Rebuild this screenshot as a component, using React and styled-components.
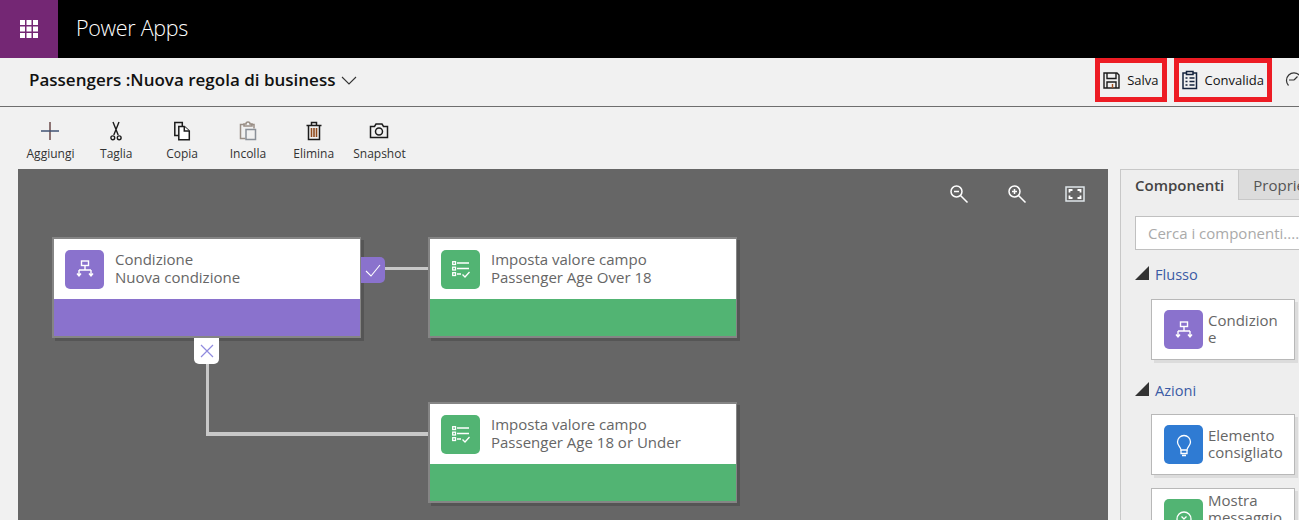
import React from "react";
import styled, { createGlobalStyle } from "styled-components";

const GlobalStyle = createGlobalStyle`
    html, body {
        margin: 0;
        padding: 0;
        height: 100%;
        overflow: hidden;
        background-color: #f1f1f1;
    }
    body {
        font-family: "Open Sans", "Noto Sans", sans-serif;
    }
`

const FlowIcon = ({ size = 22 }) => (
    <svg width={size} height={size} viewBox="0 0 22 22" fill="none" stroke="#fff" strokeWidth="1.4">
        <rect x="7.500" y="3" width="7" height="4.500" />
        <path d="M11 7.500V12M5 12h12M5 12v6M17 12v6M3 15.500l2 2.500 2-2.500M15 15.500l2 2.500 2-2.500" />
    </svg>
)

const ListIcon = ({ size = 22 }) => (
    <svg width={size} height={size} viewBox="0 0 22 22" fill="none" stroke="#fff" strokeWidth="1.3">
        <rect x="2.700" y="3.700" width="2.800" height="2.800" />
        <rect x="2.700" y="9.200" width="2.800" height="2.800" />
        <rect x="2.700" y="14.700" width="2.800" height="2.800" />
        <path d="M7 5h12M7 10.500h12M7 16h4M12.500 16.500l2.500 2.500 4.500-5" />
    </svg>
)

const BulbIcon = () => (
    <svg width="22" height="24" viewBox="0 0 22 24" fill="none" stroke="#fff" strokeWidth="1.3">
        <path d="M8 17c0-3-3.500-4-3.500-8a6.500 6.500 0 0 1 13 0c0 4-3.500 5-3.500 8z" />
        <path d="M8 17v3.500h6V17M9 22.500h4" />
    </svg>
)

const MessageIcon = () => (
    <svg width="22" height="22" viewBox="0 0 22 22" fill="none" stroke="#fff" strokeWidth="1.3">
        <circle cx="11" cy="11" r="7" />
        <path d="M8.500 8.500l5 5M13.500 8.500l-5 5" />
    </svg>
)

const AddIcon = () => (
    <svg width="20" height="20" viewBox="0 0 20 20" fill="none" strokeWidth="1.5">
        <path d="M10 1v18" stroke="#6b4a4a" />
        <path d="M1 10h18" stroke="#3f5273" />
    </svg>
)

const CutIcon = () => (
    <svg width="20" height="20" viewBox="0 0 20 20" fill="none" stroke="#1c1c1c" strokeWidth="1.4">
        <path d="M7 1l5.200 13M13 1L7.800 14" />
        <circle cx="6.800" cy="16.800" r="1.900" />
        <circle cx="13.200" cy="16.800" r="1.900" />
    </svg>
)

const CopyIcon = () => (
    <svg width="20" height="20" viewBox="0 0 20 20" fill="#fff" stroke="#1c1c1c" strokeWidth="1.5">
        <path d="M2.800 1.500h7.500v13H2.800z" fill="#f1f1f1" />
        <path d="M6.800 5.500h5.500l5 4.500v8.700H6.800z" />
        <path d="M12.300 5.500v4.500h5" />
    </svg>
)

const PasteIcon = () => (
    <svg width="20" height="20" viewBox="0 0 20 20" fill="none" stroke="#9a8f86" strokeWidth="1.5">
        <path d="M6 3.500H2.500v14h5" />
        <path d="M12.500 3.500h3.500v4" />
        <path d="M6 5V3h2a2 2 0 0 1 4 0h2v2z" />
        <path d="M8 8.500h9.500v10H8z" stroke="#8a9098" />
    </svg>
)

const DeleteIcon = () => (
    <svg width="20" height="20" viewBox="0 0 20 20" fill="none" stroke="#1c1c1c" strokeWidth="1.5">
        <path d="M2.500 4.500h15M7.500 4.500V1.500h5v3M4.500 4.500v14h11v-14" />
        <path d="M7.500 7v9M10 7v9M12.500 7v9" stroke="#8f4a1c" strokeWidth="1.600" />
    </svg>
)

const CameraIcon = () => (
    <svg width="20" height="20" viewBox="0 0 20 20" fill="none" stroke="#1c1c1c" strokeWidth="1.5">
        <path d="M1.500 5.500h4L7 3h6l1.500 2.500h4v11h-17z" />
        <circle cx="10" cy="10.500" r="3.500" />
    </svg>
)

const SaveIcon = () => (
    <svg width="17" height="17" viewBox="0 0 17 17" fill="none" stroke="#1c1c1c" strokeWidth="1.400">
        <path d="M1 1h13l2 2v13H1z" />
        <path d="M4 1v5.500h9V1M4 16v-6h9v6" />
        <path d="M9.500 12v4" stroke="#a5501e" />
    </svg>
)

const ValidateIcon = () => (
    <svg width="16" height="20" viewBox="0 0 16 20" fill="none" stroke="#14233d" strokeWidth="1.500">
        <path d="M4.500 3H1v15.500h13.500V3H11" />
        <path d="M4.500 1.500h6.500v3H4.500z" />
        <path d="M3.500 8h2M3.500 11.500h2M3.500 15h2M7.500 8h5M7.500 11.500h5M7.500 15h5" />
    </svg>
)

const ClockIcon = () => (
    <svg width="18" height="18" viewBox="0 0 18 18" fill="none" stroke="#333" strokeWidth="1.2">
        <path d="M3.500 14.500A7.500 7.500 0 1 1 14.500 14.500" />
        <path d="M9 9l3.500-3.500M9 9H4" />
    </svg>
)

const ZoomOutIcon = () => (
    <svg width="20" height="20" viewBox="0 0 20 20" fill="none" stroke="#fff" strokeWidth="1.5">
        <circle cx="7.500" cy="7.500" r="5.500" />
        <path d="M11.500 11.500l7 7M5 7.500h5" />
    </svg>
)

const ZoomInIcon = () => (
    <svg width="20" height="20" viewBox="0 0 20 20" fill="none" stroke="#fff" strokeWidth="1.5">
        <circle cx="7.500" cy="7.500" r="5.500" />
        <path d="M11.500 11.500l7 7M5 7.500h5M7.500 5v5" />
    </svg>
)

const FitIcon = () => (
    <svg width="20" height="16" viewBox="0 0 20 16" fill="none" stroke="#fff">
        <rect x="1" y="1" width="18" height="14" strokeWidth="1.500" stroke="#dfe6ea" />
        <path d="M4.500 6.500V4h3M12.500 4h3v2.500M15.500 9.500V12h-3M7.500 12h-3V9.500" strokeWidth="1.800" />
    </svg>
)

const WaffleIcon = () => (
    <svg width="18" height="18" viewBox="0 0 18 18" fill="#fff">
        {[0, 6.5, 13].map(y => [0, 6.5, 13].map(x => (
            <rect key={`${x}-${y}`} x={x} y={y} width="5" height="5" />
        )))}
    </svg>
)

const tools = [
    { label: "Aggiungi", icon: <AddIcon /> },
    { label: "Taglia", icon: <CutIcon /> },
    { label: "Copia", icon: <CopyIcon /> },
    { label: "Incolla", icon: <PasteIcon /> },
    { label: "Elimina", icon: <DeleteIcon /> },
    { label: "Snapshot", icon: <CameraIcon /> },
]

const nodes = [
    { top: 68, left: 34, tone: "#8a72cd", icon: <FlowIcon />, lines: ["Condizione", "Nuova condizione"] },
    { top: 68, left: 410, tone: "#52b473", icon: <ListIcon />, lines: ["Imposta valore campo", "Passenger Age Over 18"] },
    { top: 233, left: 410, tone: "#52b473", icon: <ListIcon />, lines: ["Imposta valore campo", "Passenger Age 18 or Under"] },
]

const App = () => {
    return (
        <Page>
            <GlobalStyle />
            <TopBar>
                <Waffle><WaffleIcon /></Waffle>
                <Brand>Power Apps</Brand>
            </TopBar>
            <TitleRow>
                <Title>Passengers :Nuova regola di business</Title>
                <Chevron width="16" height="9" viewBox="0 0 16 9" fill="none" stroke="#333" strokeWidth="1.1">
                    <path d="M1 1l7 7 7-7" />
                </Chevron>
                <Actions>
                    <ActionButton $highlight>
                        <SaveIcon />
                        Salva
                    </ActionButton>
                    <ActionButton $highlight>
                        <ValidateIcon />
                        Convalida
                    </ActionButton>
                    <ActionButton><ClockIcon /></ActionButton>
                </Actions>
            </TitleRow>
            <Toolbar>
                {tools.map(tool => (
                    <Tool key={tool.label}>
                        <ToolIcon>{tool.icon}</ToolIcon>
                        {tool.label}
                    </Tool>
                ))}
            </Toolbar>
            <Main>
                <Canvas>
                    <ZoomTools>
                        <ZoomOutIcon />
                        <ZoomInIcon />
                        <FitIcon />
                    </ZoomTools>
                    <LineH style={{ top: 98, left: 367, width: 43 }} />
                    <LineH style={{ top: 119, left: 343, width: 3, height: 2 }} />
                    <LineV style={{ top: 195, left: 188, height: 72 }} />
                    <LineH style={{ top: 263, left: 188, width: 222, height: 4 }} />
                    {nodes.map(node => (
                        <Node key={node.lines[1]} $top={node.top} $left={node.left}>
                            <NodeHead>
                                <IconTile $tone={node.tone}>{node.icon}</IconTile>
                                <NodeText>
                                    <div>{node.lines[0]}</div>
                                    <div>{node.lines[1]}</div>
                                </NodeText>
                            </NodeHead>
                            <NodeFoot $tone={node.tone} />
                        </Node>
                    ))}
                    <YesTab>
                        <svg width="16" height="13" viewBox="0 0 16 13" fill="none" stroke="#fff" strokeWidth="1.1">
                            <path d="M1 7l5 5L15 1" />
                        </svg>
                    </YesTab>
                    <NoTab>
                        <svg width="14" height="14" viewBox="0 0 14 14" fill="none" stroke="#8f8ade" strokeWidth="1.2">
                            <path d="M1 1l12 12M13 1L1 13" />
                        </svg>
                    </NoTab>
                </Canvas>
                <Panel>
                    <Tabs>
                        <Tab $active>Componenti</Tab>
                        <Tab>Proprietà</Tab>
                    </Tabs>
                    <PanelBody>
                        <Search>Cerca i componenti....</Search>
                        <SectionTitle><Triangle />Flusso</SectionTitle>
                        <Card>
                            <IconTile $tone="#8a72cd"><FlowIcon /></IconTile>
                            <CardText>Condizione</CardText>
                        </Card>
                        <SectionTitle $second><Triangle />Azioni</SectionTitle>
                        <Card>
                            <IconTile $tone="#2f7bd3"><BulbIcon /></IconTile>
                            <CardText>Elemento consigliato</CardText>
                        </Card>
                        <Card>
                            <IconTile $tone="#52b473"><MessageIcon /></IconTile>
                            <CardText>Mostra messaggio di errore</CardText>
                        </Card>
                    </PanelBody>
                </Panel>
            </Main>
        </Page>
    )
}

const Page = styled.div`
    display: flex;
    flex-direction: column;
    height: 520px;
    overflow: hidden;
    background-color: #f1f1f1;
    color: #111;
`

const TopBar = styled.header`
    display: flex;
    align-items: center;
    flex: none;
    height: 58px;
    background-color: #000;
`

const Waffle = styled.div`
    display: flex;
    align-items: center;
    justify-content: center;
    width: 58px;
    height: 58px;
    background-color: #742774;
`

const Brand = styled.div`
    margin: 0 0 3px 18px;
    font-size: 21.5px;
    font-weight: 300;
    color: #fff;
    letter-spacing: -0.3px;
`

const TitleRow = styled.div`
    display: flex;
    align-items: center;
    flex: none;
    box-sizing: border-box;
    height: 49px;
    padding: 0 0 4px 29px;
    border-bottom: 1px solid #6e6e6e;
`

const Title = styled.h1`
    margin: 0 0 1px;
    font-size: 17px;
    font-weight: 600;
    color: #111;
    white-space: nowrap;
`

const Chevron = styled.svg`
    margin-left: 6px;
`

const Actions = styled.div`
    display: flex;
    align-items: center;
    gap: 7px;
    margin-left: auto;
    margin-right: -7px;
`

const ActionButton = styled.div`
    display: flex;
    align-items: center;
    gap: 7px;
    box-sizing: border-box;
    height: 44px;
    padding: 0 3px;
    border: ${props => props.$highlight ? "5px solid #ed1c24" : "none"};
    margin-left: ${props => props.$highlight ? 0 : 3}px;
    font-size: 13px;
    color: #111;
    white-space: nowrap;
`

const Toolbar = styled.div`
    display: flex;
    flex: none;
    box-sizing: border-box;
    height: 62px;
    padding-left: 17.6px;
`

const Tool = styled.div`
    display: flex;
    flex-direction: column;
    align-items: center;
    width: 65.8px;
    padding-top: 14px;
    box-sizing: border-box;
    font-size: 12px;
    color: #333;
`

const ToolIcon = styled.div`
    display: flex;
    justify-content: center;
    height: 20px;
    margin-bottom: 4px;
`

const Main = styled.div`
    display: flex;
    flex: 1;
    min-height: 0;
    padding-left: 18px;
`

const Canvas = styled.div`
    position: relative;
    flex: none;
    width: 1090px;
    background-color: #666;
`

const ZoomTools = styled.div`
    position: absolute;
    top: 15px;
    left: 931px;
    display: flex;
    align-items: center;
    gap: 38px;
`

const LineH = styled.div`
    position: absolute;
    height: 3px;
    background-color: #c8c8c8;
`

const LineV = styled.div`
    position: absolute;
    width: 3px;
    background-color: #c8c8c8;
`

const Node = styled.div`
    position: absolute;
    top: ${props => props.$top}px;
    left: ${props => props.$left}px;
    box-sizing: border-box;
    width: 309px;
    height: 101px;
    border: 2px solid #858585;
    border-right-width: 1px;
    box-shadow: 3px 3px 0 #555;
    display: flex;
    flex-direction: column;
`

const NodeHead = styled.div`
    display: flex;
    align-items: center;
    gap: 11px;
    flex: none;
    height: 60px;
    padding-left: 11px;
    background-color: #fff;
`

const NodeFoot = styled.div`
    flex: 1;
    background-color: ${props => props.$tone};
`

const IconTile = styled.div`
    display: flex;
    align-items: center;
    justify-content: center;
    flex: none;
    width: 39px;
    height: 39px;
    border-radius: 5px;
    background-color: ${props => props.$tone};
`

const NodeText = styled.div`
    padding-bottom: 3px;
    font-size: 15px;
    line-height: 18px;
    color: #666;
    white-space: nowrap;
`

const YesTab = styled.div`
    position: absolute;
    top: 88px;
    left: 343px;
    display: flex;
    align-items: center;
    justify-content: center;
    width: 24px;
    height: 26px;
    border-radius: 0 5px 5px 0;
    background-color: #8a72cd;
`

const NoTab = styled.div`
    position: absolute;
    top: 169px;
    left: 176px;
    display: flex;
    align-items: center;
    justify-content: center;
    width: 25px;
    height: 26px;
    border-radius: 0 0 5px 5px;
    background-color: #fff;
`

const Panel = styled.aside`
    flex: none;
    box-sizing: border-box;
    width: 240px;
    margin-left: 12px;
    border: 1px solid #c8c8c8;
    border-bottom: none;
    background-color: #eee;
`

const Tabs = styled.div`
    display: flex;
    height: 30px;
`

const Tab = styled.div`
    display: flex;
    align-items: center;
    padding: 0 14px;
    font-size: 15px;
    font-weight: ${props => props.$active ? 600 : 400};
    color: ${props => props.$active ? "#444" : "#555"};
    background-color: ${props => props.$active ? "#eee" : "#dcdcdc"};
    border-right: 1px solid #c8c8c8;
    border-bottom: ${props => props.$active ? "none" : "1px solid #c8c8c8"};
`

const PanelBody = styled.div`
    padding: 16px 0 0 14px;
`

const Search = styled.div`
    box-sizing: border-box;
    display: flex;
    align-items: center;
    width: 220px;
    height: 34px;
    padding-left: 12px;
    border: 1px solid #c0c0c0;
    background-color: #fff;
    font-size: 15px;
    color: #aaa;
`

const SectionTitle = styled.div`
    display: flex;
    align-items: center;
    gap: 6px;
    height: 20px;
    margin-top: ${props => props.$second ? 20 : 14}px;
    margin-bottom: ${props => props.$second ? 14 : 15}px;
    font-size: 14.6px;
    color: #3b5ba5;
`

const Triangle = styled.span`
    align-self: flex-start;
    width: 0;
    height: 0;
    margin-top: 2px;
    border-style: solid;
    border-width: 0 0 14px 14px;
    border-color: transparent transparent #333 transparent;
`

const Card = styled.div`
    display: flex;
    align-items: center;
    gap: 5px;
    box-sizing: border-box;
    width: 144px;
    height: 61px;
    margin: 0 0 13px 16px;
    padding-left: 12px;
    border: 1px solid #b8b8b8;
    background-color: #fff;
    box-shadow: 3px 3px 0 #dcdcdc;
`

const CardText = styled.div`
    width: 76px;
    padding-bottom: 2px;
    font-size: 15px;
    line-height: 17px;
    color: #666;
    overflow-wrap: anywhere;
`

export default App;
